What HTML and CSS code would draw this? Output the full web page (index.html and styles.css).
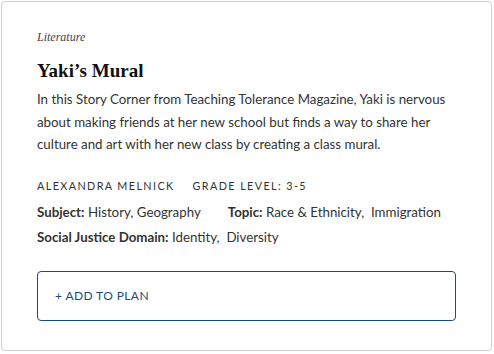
FILE: index.html
```html
<!DOCTYPE html>
<html lang="en">
<head>
    <meta charset="UTF-8">
    <title>Yaki's Mural</title>
    <link rel="stylesheet" href="styles.css">
</head>
<body>
    <div class="card">
        <p class="category">Literature</p>
        <h2 class="title">Yaki’s Mural</h2>
        <p class="summary">In this Story Corner from Teaching Tolerance Magazine, Yaki is nervous about making friends at her new school but finds a way to share her culture and art with her new class by creating a class mural.</p>

        <div class="meta">
            <span>Alexandra Melnick</span>
            <span>Grade Level: 3-5</span>
        </div>
        <div class="facets">
            <span><b>Subject:</b> History, Geography</span>
            <span><b>Topic:</b> Race &amp; Ethnicity,&nbsp; Immigration</span>
        </div>
        <div class="facets">
            <span><b>Social Justice Domain:</b> Identity,&nbsp; Diversity</span>
        </div>

        <button class="add-btn">+ ADD TO PLAN</button>
    </div>
</body>
</html>
```

FILE: styles.css
```css
body {
    margin: 0;
    padding: 1px;
    background: #fff;
    font-family: Lato, 'Open Sans', sans-serif;
    color: #333;
}

.card {
    width: 491px;
    height: 350px;
    box-sizing: border-box;
    border: 1px solid #cfcfcf;
    border-radius: 4px;
    padding: 27px 35px 0 35px;
}

.category {
    margin: 0;
    font-family: 'Liberation Serif', serif;
    font-style: italic;
    font-size: 12px;
    line-height: 16px;
    color: #444;
}

.title {
    margin: 15px 0 0;
    font-family: 'Liberation Serif', serif;
    font-weight: bold;
    font-size: 19px;
    line-height: 22px;
    color: #111;
}

.summary {
    margin: 6px 0 0;
    font-size: 13.3px;
    line-height: 22.5px;
}

.meta {
    margin-top: 22px;
    display: flex;
    gap: 18px;
    font-size: 10.8px;
    letter-spacing: 1.4px;
    text-transform: uppercase;
    line-height: 16px;
}

.facets {
    margin-top: 10px;
    display: flex;
    gap: 27px;
    font-size: 13.3px;
    line-height: 16px;
}

.facets + .facets {
    margin-top: 9px;
}

.facets b {
    font-weight: bold;
}

.add-btn {
    display: block;
    margin-top: 26px;
    width: 419px;
    height: 50px;
    padding: 0 0 0 17px;
    text-align: left;
    background: #fff;
    border: 1px solid #1b4a7c;
    border-radius: 4px;
    font-family: Lato, sans-serif;
    font-size: 12px;
    color: #1b4a7c;
    letter-spacing: 0.4px;
}
```
